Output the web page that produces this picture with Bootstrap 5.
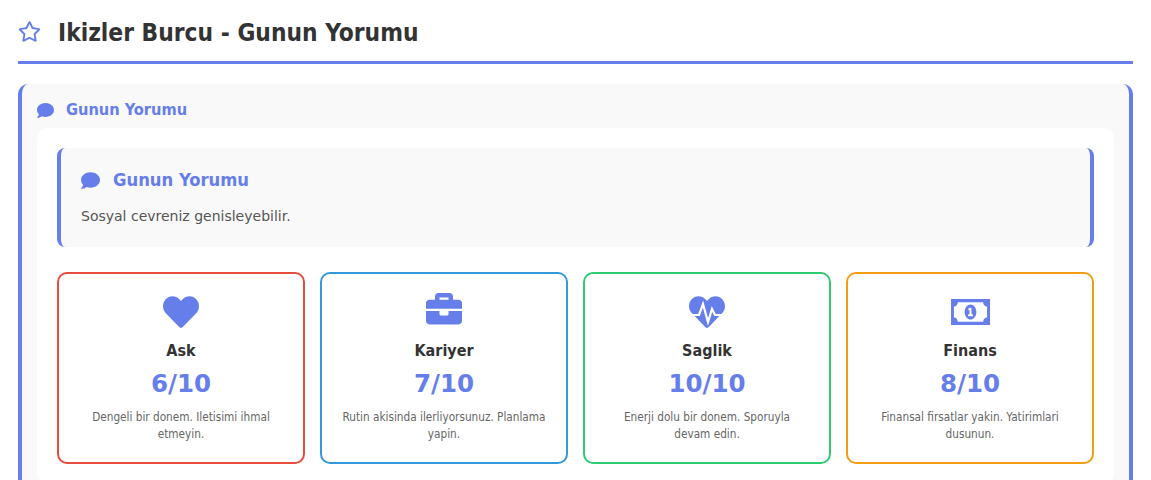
<!DOCTYPE html>
<html lang="tr">
<head>
<meta charset="UTF-8">
<meta name="viewport" content="width=device-width, initial-scale=1.0">
<title>Ikizler Burcu</title>
<link rel="stylesheet" href="https://cdn.jsdelivr.net/npm/bootstrap@5.3.7/dist/css/bootstrap.min.css">
<style>
body { font-family: "DejaVu Sans Condensed", "DejaVu Sans", sans-serif; color: #333; padding: 0 18px; background: #fff; }
svg { fill: #667eea; display: block; flex-shrink: 0; }
.page-head { height: 64px; border-bottom: 3px solid #667eea; padding-top: 19px; gap: 17px; margin-bottom: 20px; }
.page-head svg { width: 23px; height: 21px; margin-top: 2px; }
.page-head h1 { font-size: 24.3px; font-weight: 700; line-height: 28px; margin: 0; color: #333; }
.outer-box { background: #f9f9f9; border-left: 4px solid #667eea; border-right: 4px solid #667eea; border-radius: 10px; padding: 11px 15px 20px; }
.outer-title { gap: 12px; height: 33px; padding-bottom: 2px; color: #667eea; font-size: 16.25px; font-weight: 700; }
.outer-title svg { width: 17px; height: 17px; }
.inner-box { background: #fff; border-radius: 10px; padding: 20px; }
.note-box { background: #f9f9f9; border-left: 4px solid #667eea; border-right: 4px solid #667eea; border-radius: 8px; height: 99px; padding: 21px 20px 0; margin-bottom: 25px; }
.note-title { gap: 13px; font-size: 18.25px; font-weight: 700; color: #667eea; line-height: 22px; margin-bottom: 15px; }
.note-title svg { width: 19px; height: 19px; }
.note-box p { font-family: "DejaVu Sans", sans-serif; font-size: 14px; line-height: 20px; margin: 0; color: #555; }
.sign-grid { display: grid; grid-template-columns: repeat(4, 1fr); gap: 15px; }
.sign-cell { height: 192px; border: 2px solid; border-radius: 10px; padding: 18px 20px 0; text-align: center; }
.sign-cell svg { width: 36px; height: 36px; margin: 0 auto; }
.sign-cell svg.bill { width: 39px; height: 26px; margin: 7px auto 3px; }
.sign-cell h3 { font-size: 16px; font-weight: 700; line-height: 20px; margin: 0 0 8px; padding-top: 13px; color: #333; }
.sign-score { font-family: "DejaVu Sans", sans-serif; font-size: 24.5px; font-weight: 700; line-height: 30px; color: #667eea; margin-bottom: 10px; }
.sign-cell p { font-size: 11.7px; line-height: 17px; margin: 0; color: #666; }
.pulse-line { fill: none; stroke: #fff; stroke-width: 2.2; stroke-linejoin: miter; }
.c-love { border-color: #e74c3c; }
.c-work { border-color: #3498db; }
.c-health { border-color: #2ecc71; }
.c-money { border-color: #f39c12; }
</style>
</head>
<body>

<div class="page-head d-flex align-items-start">
  <svg viewBox="0 0 576 512"><path d="M528.1 171.5L382 150.2 316.7 17.8c-11.7-23.6-45.6-23.9-57.4 0L194 150.2 47.9 171.5c-26.2 3.8-36.7 36.1-17.7 54.6l105.7 103-25 145.5c-4.5 26.3 23.2 46 46.4 33.7L288 439.6l130.7 68.7c23.2 12.2 50.9-7.4 46.4-33.7l-25-145.5 105.7-103c19-18.5 8.5-50.8-17.7-54.6zM388.6 312.3l23.7 138.4L288 385.4l-124.3 65.3 23.7-138.4-100.6-98 139-20.2 62.2-126 62.2 126 139 20.2-100.6 98z"/></svg>
  <h1>Ikizler Burcu - Gunun Yorumu</h1>
</div>

<div class="outer-box">
  <div class="outer-title d-flex align-items-center">
    <svg viewBox="0 0 512 512"><path d="M256 32C114.6 32 0 125.1 0 240c0 49.6 21.4 95 57 130.7C44.5 421.1 2.7 466 2.2 466.5c-2.2 2.3-2.8 5.7-1.5 8.7S4.8 480 8 480c66.3 0 116-31.8 140.6-51.4 32.7 12.3 69 19.4 107.4 19.4 141.4 0 256-93.1 256-208S397.4 32 256 32z"/></svg>
    <span>Gunun Yorumu</span>
  </div>
  <div class="inner-box">
    <div class="note-box">
      <div class="note-title d-flex align-items-center">
        <svg viewBox="0 0 512 512"><path d="M256 32C114.6 32 0 125.1 0 240c0 49.6 21.4 95 57 130.7C44.5 421.1 2.7 466 2.2 466.5c-2.2 2.3-2.8 5.7-1.5 8.7S4.8 480 8 480c66.3 0 116-31.8 140.6-51.4 32.7 12.3 69 19.4 107.4 19.4 141.4 0 256-93.1 256-208S397.4 32 256 32z"/></svg>
        <span>Gunun Yorumu</span>
      </div>
      <p>Sosyal cevreniz genisleyebilir.</p>
    </div>
    <div class="sign-grid">
      <div class="sign-cell c-love">
        <svg viewBox="0 -30 512 512"><path d="M462.3 62.6C407.5 15.9 326 24.3 275.7 76.2L256 96.5l-19.7-20.3C186.1 24.3 104.5 15.9 49.7 62.6c-62.8 53.6-66.1 149.8-9.9 207.9l193.5 199.8c12.5 12.9 32.8 12.9 45.3 0l193.5-199.8c56.3-58.1 53-154.3-9.8-207.9z"/></svg>
        <h3>Ask</h3>
        <div class="sign-score">6/10</div>
        <p>Dengeli bir donem. Iletisimi ihmal etmeyin.</p>
      </div>
      <div class="sign-cell c-work">
        <svg viewBox="0 18 512 512"><path d="M320 336c0 8.84-7.16 16-16 16h-96c-8.84 0-16-7.16-16-16v-48H0v144c0 25.6 22.4 48 48 48h416c25.6 0 48-22.4 48-48V288H320v48zm144-208h-80V80c0-25.6-22.4-48-48-48H176c-25.6 0-48 22.4-48 48v48H48c-25.6 0-48 22.4-48 48v80h512v-80c0-25.6-22.4-48-48-48zm-144 0H192V96h128v32z"/></svg>
        <h3>Kariyer</h3>
        <div class="sign-score">7/10</div>
        <p>Rutin akisinda ilerliyorsunuz. Planlama yapin.</p>
      </div>
      <div class="sign-cell c-health">
        <svg viewBox="0 0 36 36">
          <path transform="translate(0 2.1) scale(.0703)" d="M462.3 62.6C407.5 15.9 326 24.3 275.7 76.2L256 96.5l-19.7-20.3C186.1 24.3 104.5 15.9 49.7 62.6c-62.8 53.6-66.1 149.8-9.9 207.9l193.5 199.8c12.5 12.9 32.8 12.9 45.3 0l193.5-199.8c56.3-58.1 53-154.3-9.8-207.9z"/>
          <polyline class="pulse-line" points="-3,23 10,23 14,12 19,30 23,17 26,23 39,23"/>
        </svg>
        <h3>Saglik</h3>
        <div class="sign-score">10/10</div>
        <p>Enerji dolu bir donem. Sporuyla devam edin.</p>
      </div>
      <div class="sign-cell c-money">
        <svg class="bill" viewBox="0 64 640 384" preserveAspectRatio="none"><path d="M320 144c-53.02 0-96 50.14-96 112 0 61.85 42.98 112 96 112 53 0 96-50.13 96-112 0-61.86-42.98-112-96-112zm40 168c0 4.42-3.58 8-8 8h-64c-4.42 0-8-3.58-8-8v-16c0-4.42 3.58-8 8-8h16v-55.44l-.47.31a7.992 7.992 0 0 1-11.09-2.22l-8.88-13.31a7.992 7.992 0 0 1 2.22-11.09l15.33-10.22a23.99 23.99 0 0 1 13.31-4.03H328c4.42 0 8 3.58 8 8v88h16c4.42 0 8 3.58 8 8v16zM636 64H4c-2 0-4 2-4 4v376c0 2 2 4 4 4h632c2 0 4-2 4-4V68c0-2-2-4-4-4zM592 336c-35.35 0-64 28.65-64 64H112c0-35.35-28.65-64-64-64V176c35.35 0 64-28.65 64-64h416c0 35.35 28.65 64 64 64v160z"/></svg>
        <h3>Finans</h3>
        <div class="sign-score">8/10</div>
        <p>Finansal firsatlar yakin. Yatirimlari dusunun.</p>
      </div>
    </div>
  </div>
</div>

<script src="https://cdn.jsdelivr.net/npm/bootstrap@5.3.7/dist/js/bootstrap.bundle.min.js"></script>
</body>
</html>
